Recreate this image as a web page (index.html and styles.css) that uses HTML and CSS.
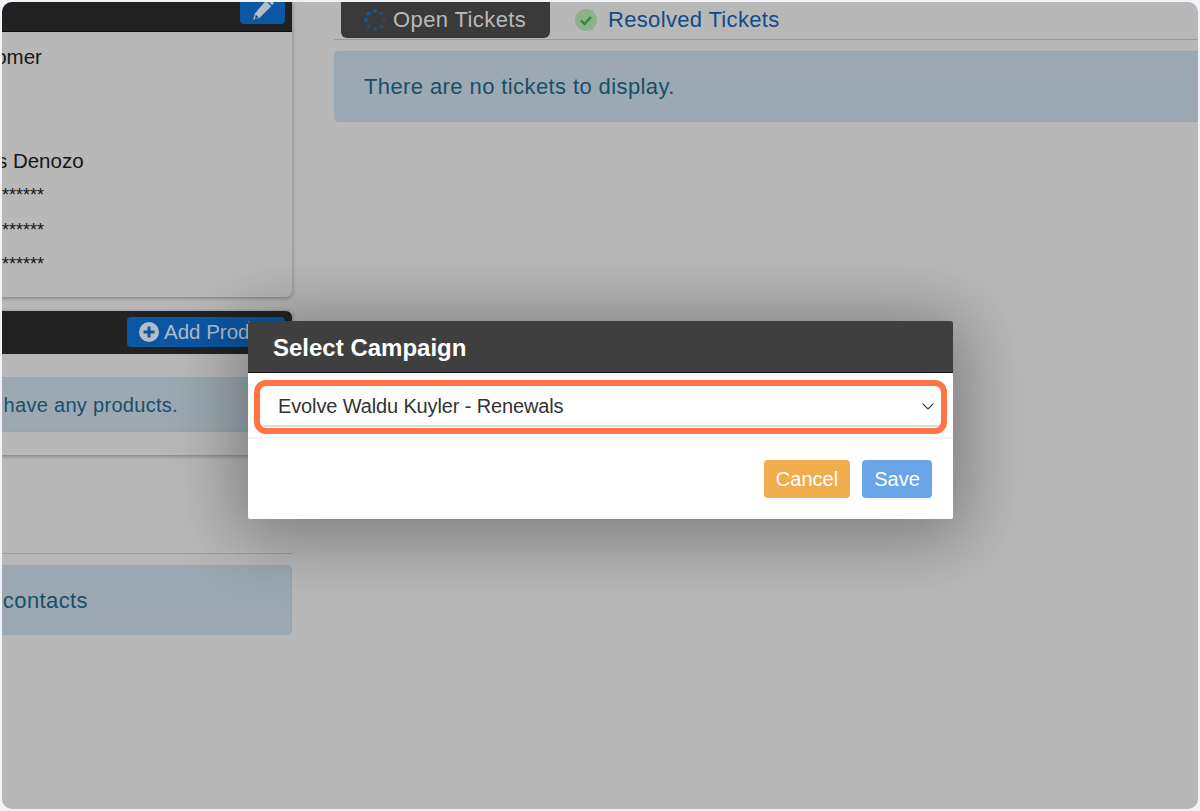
FILE: index.html
```html
<!DOCTYPE html>
<html lang="en">
<head>
<meta charset="utf-8">
<title>Select Campaign</title>
<link rel="stylesheet" href="styles.css">
</head>
<body>
<div class="screen">
  <aside class="left">
    <section class="panel panel-details">
      <header class="panel-head head-edit">
        <button class="btn-blue btn-edit" aria-label="Edit">
          <svg width="24" height="24" viewBox="0 0 24 24"><path fill="#b4bcc6" d="M14.800 2.700l5.500 5.500L8.400 20.100l-6.200 1.700 1.700-6.200z M16.400 1.100c1-1 2.500-1 3.500 0l2 2c1 1 1 2.500 0 3.500l-.7.7-5.500-5.500z"/><path fill="#0b57a4" d="M4.700 16.400l2.900 2.900-1.200.9-2.600.7.700-2.600z"/></svg>
        </button>
      </header>
      <div class="rows">
        <p class="row row-type">Customer</p>
        <p class="row row-name">Marcus Denozo</p>
        <p class="row row-mask">***************</p>
        <p class="row row-mask">***************</p>
        <p class="row row-mask">***************</p>
      </div>
    </section>
    <section class="panel panel-products">
      <header class="panel-head head-add">
        <button class="btn-blue btn-add">
          <svg width="20" height="20" viewBox="0 0 20 20"><circle cx="10" cy="10" r="10" fill="#b4bcc6"/><path d="M8.500 4.500h3v4h4v3h-4v4h-3v-4h-4v-3h4z" fill="#0b57a4"/></svg>
          <span>Add Product</span>
        </button>
      </header>
      <div class="alert alert-products">This customer does not have any products.</div>
    </section>
    <div class="contacts">
      <div class="alert alert-contacts">This customer has no contacts</div>
    </div>
  </aside>
  <main class="right">
    <nav class="tabs">
      <div class="tab tab-active">
        <svg width="24" height="24" viewBox="0 0 24 24">
          <circle cx="12" cy="3" r="2" fill="#0f5aa8"/>
          <circle cx="18.400" cy="5.600" r="1.900" fill="#2c4a6b"/>
          <circle cx="21" cy="12" r="1.900" fill="#3a4450"/>
          <circle cx="18.400" cy="18.400" r="1.900" fill="#2c4a6b"/>
          <circle cx="12" cy="21" r="1.900" fill="#1f4f80"/>
          <circle cx="5.600" cy="18.400" r="1.900" fill="#1f4f80"/>
          <circle cx="3" cy="12" r="2" fill="#0f5aa8"/>
          <circle cx="5.600" cy="5.600" r="2" fill="#0f5aa8"/>
        </svg>
        <span>Open Tickets</span>
      </div>
      <div class="tab tab-link">
        <svg width="22" height="22" viewBox="0 0 22 22"><circle cx="11" cy="11" r="11" fill="#8cb08c"/><path d="M6 11.500l3.500 3.500 6.500-7" fill="none" stroke="#2f8a3c" stroke-width="2.400"/></svg>
        <span>Resolved Tickets</span>
      </div>
    </nav>
    <div class="alert alert-tickets">There are no tickets to display.</div>
  </main>
  <div class="modal">
    <h2 class="modal-title">Select Campaign</h2>
    <div class="modal-body">
      <div class="select">
        <span>Evolve Waldu Kuyler - Renewals</span>
        <svg width="12" height="7" viewBox="0 0 12 7"><path d="M.700.700L6 6 11.300.700" fill="none" stroke="#333" stroke-width="1.100"/></svg>
      </div>
      <div class="highlight"></div>
    </div>
    <div class="modal-foot">
      <button class="btn btn-cancel">Cancel</button>
      <button class="btn btn-save">Save</button>
    </div>
  </div>
</div>
</body>
</html>
```

FILE: styles.css
```css
* { box-sizing: border-box; }
html, body { margin: 0; height: 100%; }
body {
  background: #f2f2f9;
  padding: 2px 2px 2px 2px;
  font-family: "Liberation Sans", Arial, sans-serif;
  overflow: hidden;
}
.screen {
  position: relative;
  width: 1196px;
  height: 807px;
  background: #b8b8b8;
  border-radius: 10px;
  overflow: hidden;
  display: flex;
}
.left {
  flex: none;
  width: 390px;
  margin-left: -100px;
}
.panel {
  background: #b8b8b8;
  border-radius: 0 0 6px 6px;
  box-shadow: 0 1px 4px rgba(0,0,0,.35);
}
.panel-details { height: 295px; }
.panel-products { height: 144px; margin-top: 14px; }
.panel-head {
  background: #222;
  display: flex;
  justify-content: flex-end;
  padding-right: 7px;
}
.head-edit { height: 30px; border-bottom: 1px solid #0c0c0c; }
.head-add { height: 43px; padding-top: 6px; border-radius: 6px 6px 0 0; }
.btn-blue {
  background: #0b57a4;
  border: 0;
  color: #b4bcc6;
  font: inherit;
  padding: 0;
  border-radius: 0 0 4px 4px;
  display: flex;
  align-items: center;
  justify-content: center;
  overflow: hidden;
}
.btn-edit { width: 45px; height: 22px; align-items: flex-end; padding-bottom: 2px; }
.btn-add {
  width: 158px;
  height: 30px;
  gap: 5px;
  font-size: 20.500px;
  border-radius: 4px;
  justify-content: flex-start;
  padding-left: 12px;
  white-space: nowrap;
}
.rows { color: #161616; }
.row { margin: 0; font-size: 20.500px; white-space: nowrap; }
.row-type { padding-top: 13px; padding-left: 51px; line-height: 23px; }
.row-name { margin-top: 81px; padding-left: 38px; line-height: 23px; }
.row-mask { font-size: 18px; line-height: 18px; margin-top: 16.500px; padding-left: 37px; }
.row-name + .row-mask { margin-top: 14px; }
.alert {
  background: #9ca9b2;
  border: 1px solid #93a6b4;
  border-radius: 5px;
  color: #184f6b;
  font-size: 22px;
  letter-spacing: .4px;
  white-space: nowrap;
  display: flex;
  align-items: center;
  padding-top: 2px;
}
.alert-products {
  height: 55px;
  margin-top: 23px;
  font-size: 20px;
  letter-spacing: .3px;
  justify-content: flex-end;
  padding-right: 114px;
  border-radius: 0;
  border-width: 1px 0;
}
.contacts {
  margin-top: 98px;
  border-top: 1px solid #9e9e9e;
  padding-top: 11px;
}
.alert-contacts {
  height: 70px;
  justify-content: flex-end;
  padding-right: 203px;
}
.right {
  flex: none;
  width: 900px;
  margin-left: 42px;
}
.tabs {
  height: 38px;
  padding-left: 7px;
  display: flex;
  border-bottom: 1px solid #9b9b9b;
}
.tab {
  height: 36px;
  display: flex;
  align-items: center;
  font-size: 22px;
  letter-spacing: .4px;
  white-space: nowrap;
}
.tab-active {
  width: 209px;
  background: #3a3a3a;
  color: #b9b9b9;
  border-radius: 0 0 6px 6px;
  padding-left: 22px;
  gap: 6px;
}
.tab-link {
  color: #104b87;
  margin-left: 25px;
  gap: 11px;
  letter-spacing: .33px;
}
.alert-tickets {
  height: 71px;
  margin-top: 11px;
  padding-left: 29px;
  padding-top: 0;
  border-right: 0;
  border-radius: 5px 0 0 5px;
}
.modal {
  position: absolute;
  left: 246px;
  top: 319px;
  width: 705px;
  height: 198px;
  background: #fff;
  border-radius: 2px;
  box-shadow: 0 8px 70px 12px rgba(0,0,0,.33);
  display: flex;
  flex-direction: column;
}
.modal-title {
  margin: 0;
  height: 52px;
  background: #3f3f3f;
  border-bottom: 1px solid #161616;
  border-radius: 2px 2px 0 0;
  color: #fff;
  font-size: 24px;
  font-weight: 700;
  line-height: 54px;
  padding-left: 25px;
}
.modal-body {
  position: relative;
  height: 66px;
  padding: 13px 12px 0 13px;
  border-bottom: 2px solid #f3f4f5;
}
.select {
  height: 41px;
  border-radius: 4px;
  border-bottom: 2px solid #dcdcdc;
  display: flex;
  align-items: center;
  justify-content: space-between;
  padding: 1px 7px 0 17px;
  font-size: 20px;
  letter-spacing: -.13px;
  color: #333;
  white-space: nowrap;
}
.highlight {
  position: absolute;
  left: 6px;
  top: 7px;
  width: 693px;
  height: 54px;
  border: 6px solid #ff7442;
  border-radius: 12px;
}
.modal-foot {
  flex: 1;
  display: flex;
  justify-content: flex-end;
  gap: 12px;
  padding: 21px 21px 0 0;
}
.btn {
  height: 38px;
  border: 0;
  border-radius: 4px;
  color: #fff;
  font: inherit;
  font-size: 20px;
  padding: 0;
}
.btn-cancel { width: 86px; background: #f0ad4e; }
.btn-save { width: 70px; background: #6aa5e8; }
```
